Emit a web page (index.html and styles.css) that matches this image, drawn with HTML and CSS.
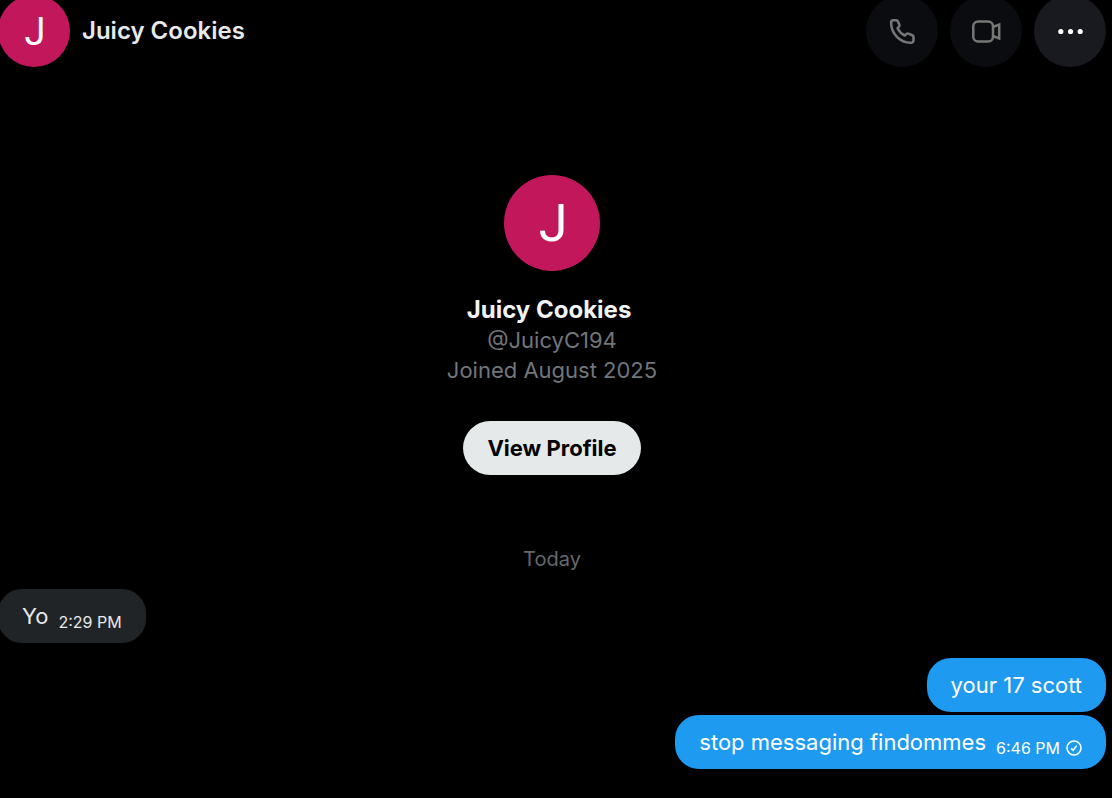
FILE: index.html
```
<!DOCTYPE html>
<html lang="en">
<head>
    <meta charset="UTF-8">
    <meta name="viewport" content="width=device-width, initial-scale=1.0">
    <title>Juicy Cookies</title>
    <link rel="stylesheet" href="styles.css">
</head>
<body>
    <div class="chat">
        <header class="chat-header">
            <div class="avatar avatar-small">J</div>
            <h1 class="chat-title">Juicy Cookies</h1>
            <div class="actions">
                <button class="icon-btn" type="button" aria-label="Audio call" disabled>
                    <svg width="30" height="30" viewBox="0 0 30 30" fill="none" stroke="currentColor" stroke-width="2.6" stroke-linejoin="round">
                        <path d="M6.4 4.3 H9.2 Q10.4 4.3 10.9 5.4 L12.4 8.8 Q12.8 9.7 12.1 10.5 L10.6 12.2 Q12.8 17 17.8 19.5 L19.6 17.9 Q20.4 17.2 21.4 17.6 L25.3 19.2 Q26.5 19.7 26.5 20.9 V24 Q26.5 26.9 23.6 26.8 C12.8 26.4 4.4 17.8 4.1 7 Q4 4.4 6.4 4.3 Z"/>
                    </svg>
                </button>
                <button class="icon-btn" type="button" aria-label="Video call" disabled>
                    <svg width="30" height="30" viewBox="0 0 30 30" fill="none" stroke="currentColor" stroke-width="2.5">
                        <rect x="2.3" y="5.5" width="19.7" height="20" rx="4.8"/>
                        <path d="M22 11 L28.2 8.6 V22.4 L22 20"/>
                    </svg>
                </button>
                <button class="icon-btn icon-btn-active" type="button" aria-label="More">
                    <svg width="30" height="30" viewBox="0 0 30 30" fill="currentColor">
                        <circle cx="5.8" cy="15.5" r="2.6"/>
                        <circle cx="15.5" cy="15.5" r="2.6"/>
                        <circle cx="25.2" cy="15.5" r="2.6"/>
                    </svg>
                </button>
            </div>
        </header>

        <main>
            <section class="profile">
                <div class="avatar avatar-large">J</div>
                <h2 class="profile-name">Juicy Cookies</h2>
                <p>@JuicyC194</p>
                <p>Joined August 2025</p>
                <button class="profile-btn" type="button">View Profile</button>
            </section>

            <p class="day">Today</p>

            <div class="messages">
                <div class="message received">
                    <span>Yo</span>
                    <time class="message-time">2:29 PM</time>
                </div>
                <div class="message sent">
                    <span>your 17 scott</span>
                </div>
                <div class="message sent">
                    <span>stop messaging findommes</span>
                    <time class="message-time">6:46 PM</time>
                    <svg class="check" width="16" height="16" viewBox="0 0 16 16" fill="none" stroke="currentColor" stroke-width="1.5">
                        <circle cx="8" cy="8" r="7"/>
                        <path d="M5.2 8.4 L7.1 10.3 L10.7 5.6"/>
                    </svg>
                </div>
            </div>
        </main>
    </div>
</body>
</html>
```
FILE: styles.css
```
* { box-sizing: border-box; }
body { margin: 0; background: #000; color: #e7e9ea; font-family: Inter, "Liberation Sans", sans-serif; font-size: 22px; line-height: 30px; overflow: hidden; }
h1, h2, p { margin: 0; }
button { font: inherit; border: 0; padding: 0; }

.chat { margin: -5px 6px 0 -2px; }

.chat-header { display: flex; align-items: center; gap: 12px; }
.chat-title { flex: 1; font-size: 24px; font-weight: 600; }

.avatar { display: flex; align-items: center; justify-content: center; padding: 2px 0 0 2px; border-radius: 50%; background: #c2185b; color: #fff; font-family: Roboto, sans-serif; }
.avatar-small { width: 72px; height: 72px; font-size: 38px; }
.avatar-large { width: 96px; height: 96px; margin-bottom: 24px; font-size: 52px; }

.actions { display: flex; gap: 12px; }
.icon-btn { display: flex; align-items: center; justify-content: center; width: 72px; height: 72px; border-radius: 50%; background: #0b0c0f; color: #767676; }
.icon-btn-active { background: #181a1f; color: #fff; }

.profile { display: flex; flex-direction: column; align-items: center; padding-top: 108px; color: #71767b; }
.profile-name { padding-right: 6px; font-size: 24px; font-weight: 700; color: #f2f3f4; }
.profile-btn { margin-top: 36px; height: 54px; padding: 0 24px; border-radius: 27px; background: #e6e9ea; color: #000; font-weight: 700; }

.day { margin: 69px 0 15px; text-align: center; font-size: 20px; color: #65686c; }

.messages { display: flex; flex-direction: column; gap: 3px; }
.message { display: flex; align-items: center; height: 54px; padding: 0 24px; border-radius: 24px; }
.received { align-self: flex-start; margin-bottom: 12px; background: #212427; }
.sent { align-self: flex-end; background: #1e9bf0; color: #fff; }
.message-time { margin: 12px 0 0 10px; font-size: 16px; }
.check { margin: 12px 0 0 6px; }
```
